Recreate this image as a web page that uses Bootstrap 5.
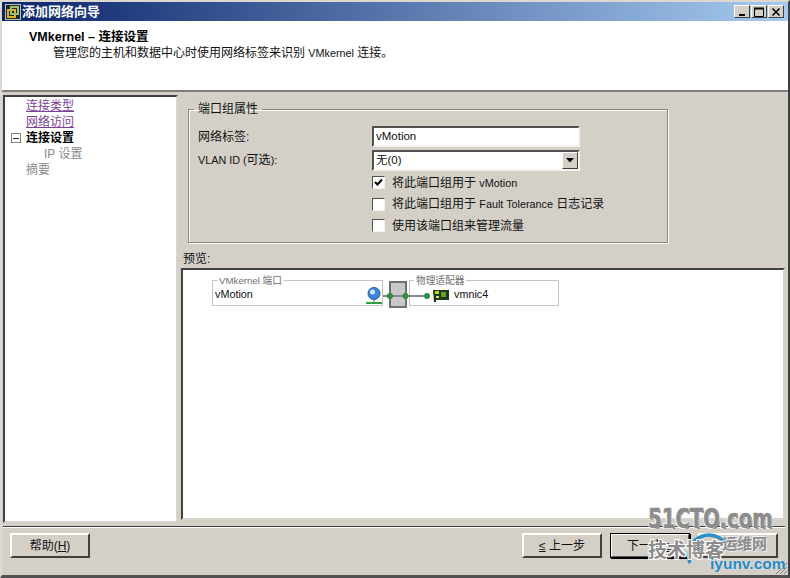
<!DOCTYPE html>
<html lang="zh"><head><meta charset="utf-8"><title>添加网络向导</title>
<link rel="stylesheet" href="https://cdn.jsdelivr.net/npm/bootstrap@5.3.0/dist/css/bootstrap.min.css">
<style>
html,body{margin:0;height:578px;overflow:hidden;background:#d4d0c8}
body{font:11px/14px "Liberation Sans","Noto Sans CJK SC",sans-serif;color:#111}
.lt{font-size:10.8px}
.win{width:790px;height:578px;position:relative;background:#d4d0c8;border-style:solid;border-color:#dcd8d0 #404040 #505050 #dcd8d0;border-width:2px 2px 3px 2px}
.tbar{height:19px;background:linear-gradient(90deg,#0a246a,#a6caf0);color:#fff;font-weight:700;font-size:13px;padding:0 4px 0 3px;flex:none}
.tbtn{width:16px;height:13px;background:#d4d0c8;border:1px solid;border-color:#fff #404040 #404040 #fff;display:flex;align-items:center;justify-content:center}
.hdr{height:71px;background:#fff;border-bottom:2px solid #808078;padding:9px 0 0 27px;font-size:12px;line-height:15px;flex:none}
.hdr b{font-size:12.5px;color:#000}
.hdr p{margin:1px 0 0 24px}
.main{flex:1;min-height:0;padding:3px 3px 0 1px}
.sidenav{width:175px;height:428px;background:#fff;border-style:solid;border-color:#404040 #d8d4cc #d8d4cc #404040;border-width:2px;padding:1px 0 0 21px;font-size:12px;line-height:16.1px;flex:none}
.sidenav a{display:block;color:#7b3f98}
.sidenav .act{font-weight:700;color:#000;position:relative}
.sidenav .dim{color:#8a8a8a}
.sidenav .ind{padding-left:18px}
.minus{position:absolute;left:-15px;top:3px;width:10px;height:10px;border:1px solid #808080;background:#fff}
.minus::after{content:"";position:absolute;left:1px;right:1px;top:3px;height:2px;border-bottom:1px solid #333}
.rpane{flex:1;min-width:0;padding:0 0 0 3px}
.fset{width:480px;height:141px;margin:7px 0 0 7px;padding:0 0 0 9px;border:1px solid #888880;box-shadow:1px 1px 0 #fff,inset 1px 1px 0 #fff;min-width:0;border-radius:0}
.fset legend{float:none;width:auto;font-size:12px;line-height:14px;margin:1px 0 0 -4px;padding:0 4px;color:#111}
.frow{height:23.5px;display:flex;align-items:center;font-size:12px}
.frow-first{margin-top:9px}
.frow label{width:174px;flex:none}
.inp{width:208px;height:21px;background:#fff;border:2px solid;border-color:#505050 #f4f2ee #f4f2ee #505050;padding:0 2px;line-height:16px;font-size:11.5px;position:relative}
.arrow{position:absolute;right:0;top:0;width:16px;height:17px;background:#d4d0c8;border:1px solid;border-color:#fff #404040 #404040 #fff;display:flex;align-items:center;justify-content:center}
.chkrow{height:21.5px;display:flex;align-items:center;padding-left:174px;font-size:12px;gap:7px}
.chk{width:13px;height:13px;background:#fff;border:1px solid;border-color:#505050 #f4f2ee #f4f2ee #505050;flex:none;display:flex}
.plabel{font-size:12px;line-height:14px;margin:9px 0 2px 2px}
.pbox{height:252px;width:604px;background:#fff;border-style:solid;border-color:#404040 #d8d4cc #d8d4cc #404040;border-width:2px;position:relative;padding:6px 0 0 29px}
.grp{border:1px solid #c4c4c4;height:30px;padding:2px 0 0 2px;margin:0;border-radius:0;min-width:0;font-size:10.8px;line-height:14px}
.grp legend{float:none;width:auto;font-size:9.7px;line-height:9px;margin:0 0 0 2px;padding:0 2px;color:#707070}
.grp1{width:171px}.grp2{width:150px}
.swbox{width:18px;height:27px;margin:5px 2px 0 6px;background:#c8c8c8;border:2px solid #707070;flex:none}
.grp2 span{margin-left:42px}
.wire{position:absolute;left:185px;top:16px}
.wire-globe{left:182px;top:17px}
.wire-nic{left:250px;top:18px}
.foot{height:49px;margin:4px 3px 0 1px;border-top:1px solid #404040;box-shadow:inset 0 1px 0 #fff;padding:6px 7px 0 7px;flex:none}
.wbtn{width:80px;height:25px;padding:0;border-radius:0;background:#d4d0c8;font-size:12px;line-height:20px;color:#111;border:2px solid;border-color:#fff #404040 #404040 #fff}
.wbtn.def{outline:1px solid #000;outline-offset:-1px;border-color:#fff #555 #555 #fff;box-shadow:1px 1px 0 #000}
.wbtn u{text-underline-offset:1px}
.wm{position:absolute;font-weight:700;white-space:nowrap;pointer-events:none}
.wm1{left:648px;top:506px;font:700 25px/26px "DejaVu Sans Condensed","DejaVu Sans",sans-serif;transform:scale(.875,1.08);transform-origin:left;color:#8c8c8c;-webkit-text-stroke:.6px #8c8c8c;text-shadow:-1px -1px 0 #fff,1px -1px 0 #fff,-1px 1px 0 #fff,1px 1px 0 #666}
.wm2{left:648px;top:538px;font:700 19px/22px "Noto Sans CJK SC",sans-serif;color:#8c8c8c;text-shadow:-1px -1px 0 #fff,1px 1px 0 #fff,1px -1px 0 #fff,-1px 1px 0 #fff}
.wm3{left:722px;top:534px;font:700 15px/18px "Noto Sans CJK SC",sans-serif;color:#8c8c8c;text-shadow:-1px -1px 0 #eee,1px 1px 0 #eee}
.wm4{left:710px;top:555px;font:700 15.5px/18px "Liberation Sans",sans-serif;color:#2389c4;text-shadow:0 0 1px #fff}
.wmarc{position:absolute;left:682px;top:530px}
.grip{position:absolute;right:0;bottom:0}
</style></head><body>
<div class="win d-flex flex-column">
 <div class="tbar d-flex align-items-center">
  <svg width="16" height="16" viewBox="0 0 16 16" class="flex-shrink-0" style="margin-right:1px"><rect x=".5" y=".5" width="15" height="15" fill="#1c2a22" stroke="#b8c0b0"/><rect x="3" y="6" width="7" height="7" fill="none" stroke="#e0b030" stroke-width="2"/><rect x="6" y="3" width="7" height="7" fill="none" stroke="#9cc070" stroke-width="2"/></svg>
  <span>添加网络向导</span>
  <div class="ms-auto d-flex" style="gap:1px">
   <div class="tbtn"><svg width="10" height="10"><rect x="2" y="7" width="6" height="2" fill="#000"/></svg></div>
   <div class="tbtn"><svg width="10" height="10"><path d="M.5 1.500h9v8h-9z" fill="none" stroke="#000"/><path d="M0 1.500h10" stroke="#000" stroke-width="2"/></svg></div>
   <div class="tbtn"><svg width="10" height="10"><path d="M1.500 1.500l7 7M8.500 1.500l-7 7" stroke="#000" stroke-width="1.600"/></svg></div>
  </div>
 </div>
 <div class="hdr"><b>VMkernel – 连接设置</b><p>管理您的主机和数据中心时使用网络标签来识别 <span class="lt">VMkernel</span> 连接。</p></div>
 <div class="main d-flex">
  <nav class="sidenav">
   <a href="#">连接类型</a><a href="#">网络访问</a>
   <div class="act"><i class="minus"></i>连接设置</div>
   <div class="dim ind">IP 设置</div>
   <div class="dim">摘要</div>
  </nav>
  <div class="rpane">
   <fieldset class="fset">
    <legend>端口组属性</legend>
    <div class="frow frow-first"><label>网络标签:</label><div class="inp lt">vMotion</div></div>
    <div class="frow"><label><span class="lt">VLAN ID (</span>可选<span class="lt">):</span></label><div class="inp">无(0)<span class="arrow"><svg width="8" height="5"><path d="M0 0h8L4 4.500z" fill="#000"/></svg></span></div></div>
    <div class="chkrow"><span class="chk"><svg width="11" height="11"><path d="M2 5l2.500 2.500L9 2.500" fill="none" stroke="#000" stroke-width="2"/></svg></span><span>将此端口组用于 <span class="lt">vMotion</span></span></div>
    <div class="chkrow"><span class="chk"></span><span>将此端口组用于 <span class="lt">Fault Tolerance</span> 日志记录</span></div>
    <div class="chkrow"><span class="chk"></span><span>使用该端口组来管理流量</span></div>
   </fieldset>
   <div class="plabel">预览:</div>
   <div class="pbox d-flex align-items-start">
    <fieldset class="grp grp1"><legend>VMkernel 端口</legend>vMotion</fieldset>
    <div class="swbox"></div>
    <fieldset class="grp grp2"><legend>物理适配器</legend><span>vmnic4</span></fieldset>
    <svg class="wire" width="64" height="24" viewBox="0 0 64 24">
     <path d="M15 10H60" stroke="#888" stroke-width="2"/>
     <circle cx="22" cy="10" r="3" fill="#2f8f3f"/><circle cx="37.500" cy="10" r="3" fill="#2f8f3f"/><circle cx="59" cy="10" r="3" fill="#2f8f3f"/>
    </svg>
    <svg class="wire wire-globe" width="18" height="18" viewBox="0 0 18 18"><circle cx="9" cy="6.500" r="6" fill="#3b86d6" stroke="#2a5a9a"/><circle cx="7.500" cy="5" r="2.500" fill="#cfe6fa"/><path d="M9 13v2" stroke="#666"/><path d="M1 16h16" stroke="#2f9f3f" stroke-width="2"/></svg>
    <svg class="wire wire-nic" width="17" height="15" viewBox="0 0 17 15"><path d="M0 2h16v10H3v2H1z" fill="#1c3a1c"/><rect x="2" y="3" width="4" height="3" fill="#c8d020"/><rect x="8" y="4" width="5" height="5" fill="#6aa02a"/><rect x="3" y="8" width="3" height="2" fill="#e0e040"/></svg>
   </div>
  </div>
 </div>
 <div class="foot d-flex align-items-start">
  <button class="btn wbtn">帮助(<u>H</u>)</button>
  <div class="ms-auto d-flex">
   <button class="btn wbtn me-2"><u>≤</u> 上一步</button>
   <button class="btn wbtn def">下一步 <u>≥</u></button>
   <button class="btn wbtn ms-2">取消</button>
  </div>
 </div>
 <svg class="grip" width="14" height="14"><path d="M13 2L2 13M13 6L6 13M13 10L10 13" stroke="#808080"/></svg>
</div>
<svg class="wmarc" width="60" height="46"><path d="M8 33A20 20 0 1 1 46 18" fill="none" stroke="#2a8fca" stroke-width="3.500"/></svg>
<div class="wm wm1">51CTO.com</div>
<div class="wm wm2">技术博客</div>
<div class="wm wm3">运维网</div>
<div class="wm wm4">iyunv.com</div>
</body></html>
